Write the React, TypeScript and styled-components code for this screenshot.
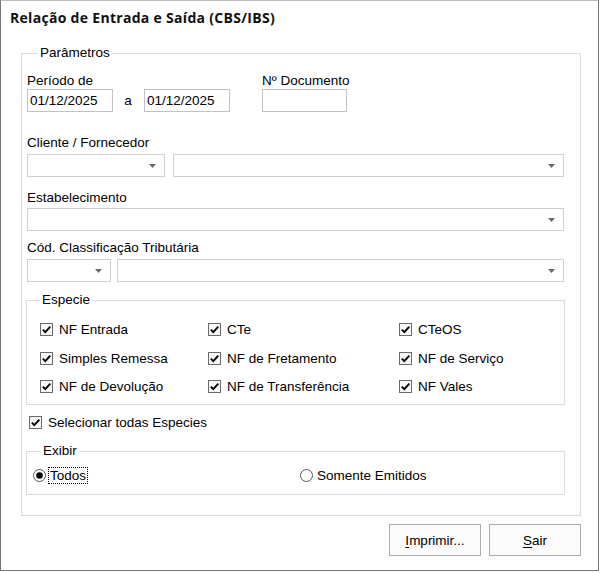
import React from "react";
import styled, { createGlobalStyle } from "styled-components";

const Global = createGlobalStyle`
  html, body { margin: 0; padding: 0; background: #ffffff; }
  body { font-family: "Liberation Sans", Arial, sans-serif; color: #000; }
  * { box-sizing: border-box; }
`;

const Window = styled.div`
  width: 599px;
  height: 571px;
  background: #ffffff;
  border: 1px solid #767676;
  border-top-color: #bdbdbd;
  padding-top: 7px;
  font-family: "Liberation Sans", Arial, sans-serif;
  font-size: 13.5px;
`;

const Title = styled.h1`
  margin: 0 0 0 9px;
  font-family: "Open Sans", "Noto Sans", sans-serif;
  font-weight: 700;
  font-size: 14px;
  letter-spacing: 0.3px;
  line-height: 20px;
  color: #111;
  white-space: nowrap;
`;

const GroupBox = styled.fieldset<{ $pad: string; $w: number; $ml?: number; $mt?: number }>`
  margin: ${(p) => p.$mt ?? 0}px 0 0 ${(p) => p.$ml ?? 0}px;
  padding: ${(p) => p.$pad};
  width: ${(p) => p.$w}px;
  min-width: 0;
  border: 1px solid #dcdcdc;
`;

const Legend = styled.legend<{ $ml: number }>`
  margin-left: ${(p) => p.$ml}px;
  padding: 0 2px;
  font-size: 13.5px;
  line-height: 16px;
  color: #000;
`;

const Label = styled.div<{ $mb?: number }>`
  font-size: 13.5px;
  line-height: 16px;
  height: 16px;
  margin-bottom: ${(p) => p.$mb ?? 0}px;
  white-space: nowrap;
`;

const Row = styled.div<{ $mt?: number; $gap?: number }>`
  display: flex;
  align-items: flex-start;
  margin-top: ${(p) => p.$mt ?? 0}px;
  gap: ${(p) => p.$gap ?? 0}px;
`;

const Block = styled.div<{ $mt?: number; $ml?: number }>`
  display: flex;
  flex-direction: column;
  margin-top: ${(p) => p.$mt ?? 0}px;
  margin-left: ${(p) => p.$ml ?? 0}px;
`;

const TextBox = styled.div<{ $w: number }>`
  width: ${(p) => p.$w}px;
  height: 23px;
  border: 1px solid #c2c2c2;
  background: #ffffff;
  padding: 0 2px;
  display: flex;
  align-items: center;
  font-size: 13.5px;
  white-space: nowrap;
`;

const Sep = styled.div`
  width: 31px;
  height: 23px;
  display: flex;
  align-items: center;
  justify-content: center;
  font-size: 13.5px;
  padding-right: 1px;
`;

const Combo = styled.div<{ $w: number }>`
  width: ${(p) => p.$w}px;
  height: 23px;
  border: 1px solid #cfcfcf;
  background: #ffffff;
  display: flex;
  align-items: center;
  justify-content: flex-end;
  padding-right: 8px;
`;

const Arrow = () => (
  <svg width="7" height="4" viewBox="0 0 7 4">
    <path d="M0 0 H7 L3.5 4 Z" fill="#6a6a6a" />
  </svg>
);

const CheckGrid = styled.div`
  display: grid;
  grid-template-columns: 168px 191px 1fr;
  grid-auto-rows: 17px;
  row-gap: 11.5px;
`;

const CheckItem = styled.div<{ $ml?: number; $mt?: number }>`
  display: flex;
  align-items: center;
  gap: 6px;
  height: 17px;
  margin-left: ${(p) => p.$ml ?? 0}px;
  margin-top: ${(p) => p.$mt ?? 0}px;
  font-size: 13.5px;
  white-space: nowrap;
`;

const Box = styled.span`
  width: 13px;
  height: 13px;
  border: 1px solid #6a6a6a;
  background: #f7f7f7;
  display: inline-flex;
  align-items: center;
  justify-content: center;
  flex: none;
`;

const Check = ({ label, ml, mt }: { label: string; ml?: number; mt?: number }) => (
  <CheckItem $ml={ml} $mt={mt}>
    <Box>
      <svg width="11" height="11" viewBox="0 0 11 11">
        <path d="M1.8 5.6 L4.3 8.1 L9.3 2.6" fill="none" stroke="#000" strokeWidth="1.9" />
      </svg>
    </Box>
    <span>{label}</span>
  </CheckItem>
);

const RadioGrid = styled.div`
  display: grid;
  grid-template-columns: 267px 1fr;
  height: 17px;
`;

const RadioItem = styled.div`
  display: flex;
  align-items: center;
  gap: 2px;
  height: 17px;
  font-size: 13.5px;
  white-space: nowrap;
`;

const Focus = styled.span<{ $focus?: boolean }>`
  border: 1px dotted ${(p) => (p.$focus ? "#000" : "transparent")};
  padding: 0 1px;
  line-height: 15px;
`;

const Radio = ({ label, on, focus }: { label: string; on?: boolean; focus?: boolean }) => (
  <RadioItem>
    <svg width="13" height="13" viewBox="0 0 13 13">
      <circle cx="6.5" cy="6.5" r="6" fill="#fff" stroke="#555" strokeWidth="1" />
      {on && <circle cx="6.5" cy="6.5" r="3.3" fill="#000" />}
    </svg>
    <Focus $focus={focus}>{label}</Focus>
  </RadioItem>
);

const ButtonBar = styled.div`
  display: flex;
  justify-content: flex-end;
  gap: 8px;
  width: 560px;
  margin: 8px 0 0 20px;
`;

const Button = styled.div`
  width: 92px;
  height: 32px;
  border: 1px solid #adadad;
  background: #fbfbfb;
  display: flex;
  align-items: center;
  justify-content: center;
  font-size: 13.5px;
`;

const U = styled.span`
  text-decoration: underline;
  text-underline-offset: 2px;
`;

export default function App() {
  return (
    <>
      <Global />
      <Window>
        <Title>Relação de Entrada e Saída (CBS/IBS)</Title>
        <GroupBox $pad="12px 16px 20px 5px" $w={560} $ml={20} $mt={17}>
          <Legend $ml={11}>Parâmetros</Legend>
          <Row>
            <Block>
              <Label>Período de</Label>
              <Row>
                <TextBox $w={86}>01/12/2025</TextBox>
                <Sep>a</Sep>
                <TextBox $w={86}>01/12/2025</TextBox>
              </Row>
            </Block>
            <Block $ml={32}>
              <Label>Nº Documento</Label>
              <TextBox $w={85} />
            </Block>
          </Row>

          <Block $mt={23}>
            <Label $mb={3}>Cliente / Fornecedor</Label>
            <Row $gap={8}>
              <Combo $w={138}><Arrow /></Combo>
              <Combo $w={391}><Arrow /></Combo>
            </Row>
          </Block>

          <Block $mt={13}>
            <Label $mb={2}>Estabelecimento</Label>
            <Combo $w={537}><Arrow /></Combo>
          </Block>

          <Block $mt={9}>
            <Label $mb={3}>Cód. Classificação Tributária</Label>
            <Row $gap={6}>
              <Combo $w={84}><Arrow /></Combo>
              <Combo $w={447}><Arrow /></Combo>
            </Row>
          </Block>

          <GroupBox $pad="13px 0 9px 13px" $w={539} $ml={-1} $mt={10}>
            <Legend $ml={0}>Especie</Legend>
            <CheckGrid>
              <Check label="NF Entrada" />
              <Check label="CTe" />
              <Check label="CTeOS" />
              <Check label="Simples Remessa" />
              <Check label="NF de Fretamento" />
              <Check label="NF de Serviço" />
              <Check label="NF de Devolução" />
              <Check label="NF de Transferência" />
              <Check label="NF Vales" />
            </CheckGrid>
          </GroupBox>

          <Check label="Selecionar todas Especies" ml={2} mt={9} />

          <GroupBox $pad="8px 0 10px 6px" $w={539} $ml={-1} $mt={12}>
            <Legend $ml={8}>Exibir</Legend>
            <RadioGrid>
              <Radio label="Todos" on focus />
              <Radio label="Somente Emitidos" />
            </RadioGrid>
          </GroupBox>
        </GroupBox>

        <ButtonBar>
          <Button><span><U>I</U>mprimir...</span></Button>
          <Button><span><U>S</U>air</span></Button>
        </ButtonBar>
      </Window>
    </>
  );
}
